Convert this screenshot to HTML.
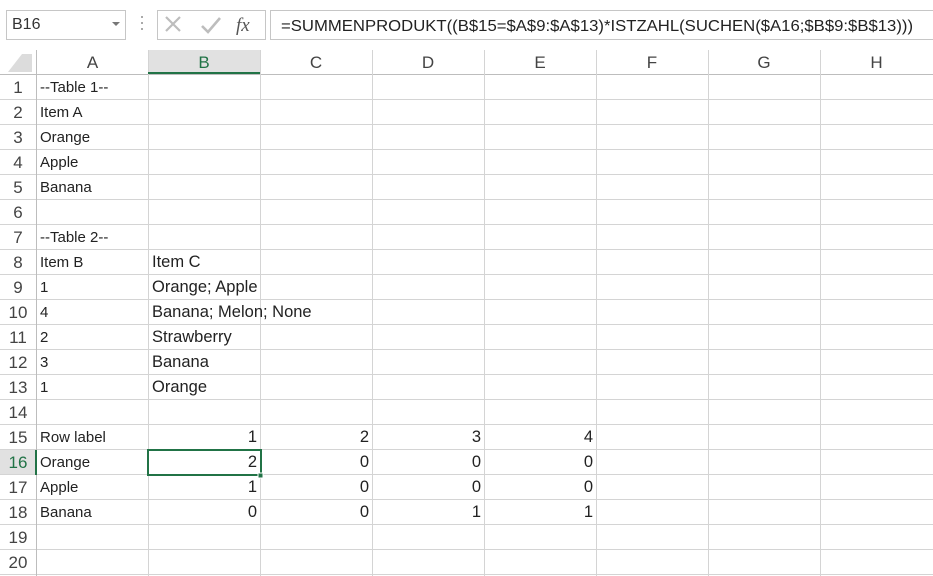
<!DOCTYPE html>
<html><head><style>
*{margin:0;padding:0;box-sizing:border-box}
body{width:933px;height:576px;overflow:hidden;background:#fff;font-family:"Liberation Sans",Arial,sans-serif;position:relative;color:#222}
.a{position:absolute}
.t{position:absolute;font-size:15px;line-height:25px;white-space:nowrap}
.b{font-size:16.5px}
.r{text-align:right}
.rh{position:absolute;left:0;width:36px;text-align:center;font-size:17px;line-height:25px;color:#444}
.ch{position:absolute;top:50px;height:24px;text-align:center;font-size:17px;line-height:26px;color:#444}
</style></head><body>
<div class="a" style="left:6px;top:10px;width:120px;height:30px;border:1px solid #c6c6c6"></div>
<div class="t" style="left:12px;top:12px;font-size:16px;color:#333">B16</div>
<div class="a" style="left:112px;top:22px;width:0;height:0;border-left:4px solid transparent;border-right:4px solid transparent;border-top:4px solid #777"></div>
<div class="a" style="left:141px;top:16px;width:2px;height:2px;background:#aaa;box-shadow:0 6px 0 #aaa,0 12px 0 #aaa"></div>
<div class="a" style="left:157px;top:10px;width:109px;height:30px;border:1px solid #c6c6c6"></div>
<svg class="a" style="left:157px;top:10px" width="109" height="30">
<path d="M9 7 L23 21 M23 7 L9 21" stroke="#bdbdbd" stroke-width="2.2" fill="none"/>
<path d="M45 16 L51 22 L63 8" stroke="#bdbdbd" stroke-width="2.6" fill="none"/>
<text x="79" y="21" font-family="Liberation Serif" font-style="italic" font-size="19" fill="#555">fx</text>
</svg>
<div class="a" style="left:270px;top:10px;width:663px;height:30px;border:1px solid #c6c6c6;border-right:none"></div>
<svg class="a" style="left:270px;top:10px" width="663" height="30"><text x="11" y="21" font-size="16" textLength="632" lengthAdjust="spacingAndGlyphs" fill="#222">=SUMMENPRODUKT((B$15=$A$9:$A$13)*ISTZAHL(SUCHEN($A16;$B$9:$B$13)))</text></svg>

<svg class="a" style="left:0;top:48px" width="933" height="528">
<rect x="148" y="2" width="112" height="24" fill="#e1e1e1"/>
<rect x="0" y="402" width="36" height="25" fill="#e1e1e1"/>
<path d="M22 6 L32 6 L32 24 L8 24 Z" fill="#dcdcdc"/>
<g stroke="#d4d4d4" stroke-width="1">
<line x1="0" y1="26.5" x2="933" y2="26.5" stroke="#bdbdbd"/>
<line x1="0" y1="51.5" x2="933" y2="51.5"/><line x1="0" y1="76.5" x2="933" y2="76.5"/><line x1="0" y1="101.5" x2="933" y2="101.5"/><line x1="0" y1="126.5" x2="933" y2="126.5"/><line x1="0" y1="151.5" x2="933" y2="151.5"/><line x1="0" y1="176.5" x2="933" y2="176.5"/><line x1="0" y1="201.5" x2="933" y2="201.5"/><line x1="0" y1="226.5" x2="933" y2="226.5"/><line x1="0" y1="251.5" x2="933" y2="251.5"/><line x1="0" y1="276.5" x2="933" y2="276.5"/><line x1="0" y1="301.5" x2="933" y2="301.5"/><line x1="0" y1="326.5" x2="933" y2="326.5"/><line x1="0" y1="351.5" x2="933" y2="351.5"/><line x1="0" y1="376.5" x2="933" y2="376.5"/><line x1="0" y1="401.5" x2="933" y2="401.5"/><line x1="0" y1="426.5" x2="933" y2="426.5"/><line x1="0" y1="451.5" x2="933" y2="451.5"/><line x1="0" y1="476.5" x2="933" y2="476.5"/><line x1="0" y1="501.5" x2="933" y2="501.5"/><line x1="0" y1="526.5" x2="933" y2="526.5"/>
<line x1="36.5" y1="2" x2="36.5" y2="528" stroke="#bdbdbd"/>
<line x1="148.5" y1="2" x2="148.5" y2="528"/><line x1="260.5" y1="2" x2="260.5" y2="528"/><line x1="372.5" y1="2" x2="372.5" y2="528"/><line x1="484.5" y1="2" x2="484.5" y2="528"/><line x1="596.5" y1="2" x2="596.5" y2="528"/><line x1="708.5" y1="2" x2="708.5" y2="528"/><line x1="820.5" y1="2" x2="820.5" y2="528"/>
</g>
<rect x="148" y="24" width="112" height="2" fill="#217346"/>
<rect x="35" y="402" width="2" height="25" fill="#217346"/>
<rect x="148" y="402" width="113" height="25" fill="none" stroke="#217346" stroke-width="2"/>
<rect x="258" y="425" width="5" height="5" fill="#217346" stroke="#fff" stroke-width="1"/>
</svg>

<div class="ch" style="left:37px;width:111px">A</div>
<div class="ch" style="left:148px;width:112px;color:#217346">B</div>
<div class="ch" style="left:260px;width:112px">C</div>
<div class="ch" style="left:372px;width:112px">D</div>
<div class="ch" style="left:484px;width:112px">E</div>
<div class="ch" style="left:596px;width:112px">F</div>
<div class="ch" style="left:708px;width:112px">G</div>
<div class="ch" style="left:820px;width:113px">H</div>

<div class="rh" style="top:75px">1</div><div class="rh" style="top:100px">2</div><div class="rh" style="top:125px">3</div><div class="rh" style="top:150px">4</div><div class="rh" style="top:175px">5</div><div class="rh" style="top:200px">6</div><div class="rh" style="top:225px">7</div><div class="rh" style="top:250px">8</div><div class="rh" style="top:275px">9</div><div class="rh" style="top:300px">10</div><div class="rh" style="top:325px">11</div><div class="rh" style="top:350px">12</div><div class="rh" style="top:375px">13</div><div class="rh" style="top:400px">14</div><div class="rh" style="top:425px">15</div><div class="rh" style="top:450px;color:#217346">16</div><div class="rh" style="top:475px">17</div><div class="rh" style="top:500px">18</div><div class="rh" style="top:525px">19</div><div class="rh" style="top:550px">20</div>

<div class="t" style="left:40px;top:75px">--Table 1--</div>
<div class="t" style="left:40px;top:100px">Item A</div>
<div class="t" style="left:40px;top:125px">Orange</div>
<div class="t" style="left:40px;top:150px">Apple</div>
<div class="t" style="left:40px;top:175px">Banana</div>
<div class="t" style="left:40px;top:225px">--Table 2--</div>
<div class="t" style="left:40px;top:250px">Item B</div>
<div class="t" style="left:40px;top:275px">1</div>
<div class="t" style="left:40px;top:300px">4</div>
<div class="t" style="left:40px;top:325px">2</div>
<div class="t" style="left:40px;top:350px">3</div>
<div class="t" style="left:40px;top:375px">1</div>
<div class="t" style="left:40px;top:425px">Row label</div>
<div class="t" style="left:40px;top:450px">Orange</div>
<div class="t" style="left:40px;top:475px">Apple</div>
<div class="t" style="left:40px;top:500px">Banana</div>

<div class="t b" style="left:152px;top:250px">Item C</div>
<div class="t b" style="left:152px;top:275px">Orange; Apple</div>
<div class="t b" style="left:152px;top:300px">Banana; Melon; None</div>
<div class="t b" style="left:152px;top:325px">Strawberry</div>
<div class="t b" style="left:152px;top:350px">Banana</div>
<div class="t b" style="left:152px;top:375px">Orange</div>

<div class="t r b" style="left:148px;width:109px;top:425px">1</div>
<div class="t r b" style="left:260px;width:109px;top:425px">2</div>
<div class="t r b" style="left:372px;width:109px;top:425px">3</div>
<div class="t r b" style="left:484px;width:109px;top:425px">4</div>
<div class="t r b" style="left:148px;width:109px;top:450px">2</div>
<div class="t r b" style="left:260px;width:109px;top:450px">0</div>
<div class="t r b" style="left:372px;width:109px;top:450px">0</div>
<div class="t r b" style="left:484px;width:109px;top:450px">0</div>
<div class="t r b" style="left:148px;width:109px;top:475px">1</div>
<div class="t r b" style="left:260px;width:109px;top:475px">0</div>
<div class="t r b" style="left:372px;width:109px;top:475px">0</div>
<div class="t r b" style="left:484px;width:109px;top:475px">0</div>
<div class="t r b" style="left:148px;width:109px;top:500px">0</div>
<div class="t r b" style="left:260px;width:109px;top:500px">0</div>
<div class="t r b" style="left:372px;width:109px;top:500px">1</div>
<div class="t r b" style="left:484px;width:109px;top:500px">1</div>
</body></html>
